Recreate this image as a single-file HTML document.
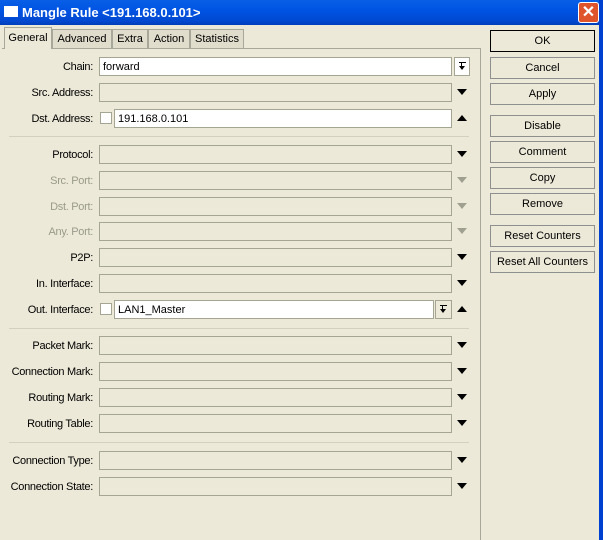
<!DOCTYPE html>
<html><head><style>
*{margin:0;padding:0;box-sizing:border-box}
body{width:603px;height:540px;overflow:hidden;background:#ECE9D8;font-family:"Liberation Sans",sans-serif;font-size:11px;position:relative;color:#000}
.a{position:absolute}
.title{left:0;top:0;width:603px;height:25px;background:linear-gradient(#0A5FE6,#0054E3 40%,#0048D0 85%,#003DB8);color:#fff;font-weight:bold;font-size:13px}
.rb{left:599px;top:0;width:4px;height:540px;background:#0040D0}
.lab{right:510px;width:100px;text-align:right;letter-spacing:-0.3px}
.f{height:19px;border:1px solid #A5A593;background:#ECE9D8}
.fw{background:#fff}
.tri{width:0;height:0;border-left:5px solid transparent;border-right:5px solid transparent}
.dn{border-top:6px solid #000}
.up{border-bottom:6px solid #000}
.dis{border-top-color:#A0A090}
.btn{left:490px;width:105px;height:22px;border:1px solid #8E8F8F;background:#ECE9D8;text-align:center;line-height:21px}
.sep{left:9px;width:460px;height:1px;background:#D4D0C0}
.cb{width:12px;height:12px;border:1px solid #A5A593;background:#fff}
.tab{top:29px;height:19px;border:1px solid #A8A89A;border-bottom:none;background:#E0DDCC;text-align:center;line-height:19px}
.gray{color:#9A9A8A}
.dd{width:16px;height:19px;border:1px solid #A5A593}
.dd i{position:absolute;left:4px;top:6px;width:0;height:0;border-left:3px solid transparent;border-right:3px solid transparent;border-top:4px solid #000}
.dd b{position:absolute;left:4px;top:4px;width:7px;height:1px;background:#000}
.dd u{position:absolute;left:6px;top:5px;width:1px;height:3px;background:#000}
</style></head><body>
<div class="a title"><div class="a" style="left:4px;top:6px;width:14px;height:11px;background:#fff;border-top:3px solid #fff"></div><span class="a" style="left:22px;top:5px">Mangle Rule &lt;191.168.0.101&gt;</span>
<div class="a" style="left:578px;top:2px;width:21px;height:21px;background:#E0542C;border:1px solid #fff;border-radius:3px;color:#fff;font-size:16px;text-align:center;line-height:19px">✕</div></div>
<div class="a rb"></div>
<div class="a" style="left:2px;top:48px;width:479px;height:492px;border-top:1px solid #A8A89A;border-right:1px solid #A8A89A"></div>
<div class="a tab" style="left:4px;width:48px;top:27px;height:22px;background:#ECE9D8;line-height:20px">General</div>
<div class="a tab" style="left:52px;width:60px">Advanced</div>
<div class="a tab" style="left:112px;width:36px">Extra</div>
<div class="a tab" style="left:148px;width:42px">Action</div>
<div class="a tab" style="left:190px;width:54px">Statistics</div>

<div class="a lab" style="top:61px">Chain:</div>
<div class="a f fw" style="left:99px;top:57px;width:353px;padding-left:3px;line-height:18px">forward</div>
<div class="a dd" style="left:454px;top:57px;background:#fff"><b></b><u></u><i style="top:8px"></i></div>

<div class="a lab" style="top:87px">Src. Address:</div><div class="a f" style="left:99px;top:83px;width:353px"></div><div class="a tri dn" style="left:457px;top:89px"></div>

<div class="a lab" style="top:113px">Dst. Address:</div><div class="a cb" style="left:100px;top:112px"></div>
<div class="a f fw" style="left:114px;top:109px;width:338px;padding-left:3px;line-height:18px">191.168.0.101</div><div class="a tri up" style="left:457px;top:115px"></div>
<div class="a sep" style="top:136px"></div>

<div class="a lab" style="top:149px">Protocol:</div><div class="a f" style="left:99px;top:145px;width:353px"></div><div class="a tri dn" style="left:457px;top:151px"></div>
<div class="a lab gray" style="top:175px">Src. Port:</div><div class="a f" style="left:99px;top:171px;width:353px"></div><div class="a tri dn dis" style="left:457px;top:177px"></div>
<div class="a lab gray" style="top:201px">Dst. Port:</div><div class="a f" style="left:99px;top:197px;width:353px"></div><div class="a tri dn dis" style="left:457px;top:203px"></div>
<div class="a lab gray" style="top:226px">Any. Port:</div><div class="a f" style="left:99px;top:222px;width:353px"></div><div class="a tri dn dis" style="left:457px;top:228px"></div>
<div class="a lab" style="top:252px">P2P:</div><div class="a f" style="left:99px;top:248px;width:353px"></div><div class="a tri dn" style="left:457px;top:254px"></div>
<div class="a lab" style="top:278px">In. Interface:</div><div class="a f" style="left:99px;top:274px;width:353px"></div><div class="a tri dn" style="left:457px;top:280px"></div>

<div class="a lab" style="top:304px">Out. Interface:</div><div class="a cb" style="left:100px;top:303px"></div>
<div class="a f fw" style="left:114px;top:300px;width:320px;padding-left:3px;line-height:18px">LAN1_Master</div>
<div class="a dd" style="left:435px;top:300px;width:17px;background:#ECE9D8"><b></b><u></u><i style="top:8px"></i></div>
<div class="a tri up" style="left:457px;top:306px"></div>
<div class="a sep" style="top:328px"></div>

<div class="a lab" style="top:340px">Packet Mark:</div><div class="a f" style="left:99px;top:336px;width:353px"></div><div class="a tri dn" style="left:457px;top:342px"></div>
<div class="a lab" style="top:366px">Connection Mark:</div><div class="a f" style="left:99px;top:362px;width:353px"></div><div class="a tri dn" style="left:457px;top:368px"></div>
<div class="a lab" style="top:392px">Routing Mark:</div><div class="a f" style="left:99px;top:388px;width:353px"></div><div class="a tri dn" style="left:457px;top:394px"></div>
<div class="a lab" style="top:418px">Routing Table:</div><div class="a f" style="left:99px;top:414px;width:353px"></div><div class="a tri dn" style="left:457px;top:420px"></div>
<div class="a sep" style="top:442px"></div>
<div class="a lab" style="top:455px">Connection Type:</div><div class="a f" style="left:99px;top:451px;width:353px"></div><div class="a tri dn" style="left:457px;top:457px"></div>
<div class="a lab" style="top:481px">Connection State:</div><div class="a f" style="left:99px;top:477px;width:353px"></div><div class="a tri dn" style="left:457px;top:483px"></div>

<div class="a btn" style="top:30px;border:1px solid #000">OK</div>
<div class="a btn" style="top:57px">Cancel</div>
<div class="a btn" style="top:83px">Apply</div>
<div class="a btn" style="top:115px">Disable</div>
<div class="a btn" style="top:141px">Comment</div>
<div class="a btn" style="top:167px">Copy</div>
<div class="a btn" style="top:193px">Remove</div>
<div class="a btn" style="top:225px">Reset Counters</div>
<div class="a btn" style="top:251px">Reset All Counters</div>
</body></html>
